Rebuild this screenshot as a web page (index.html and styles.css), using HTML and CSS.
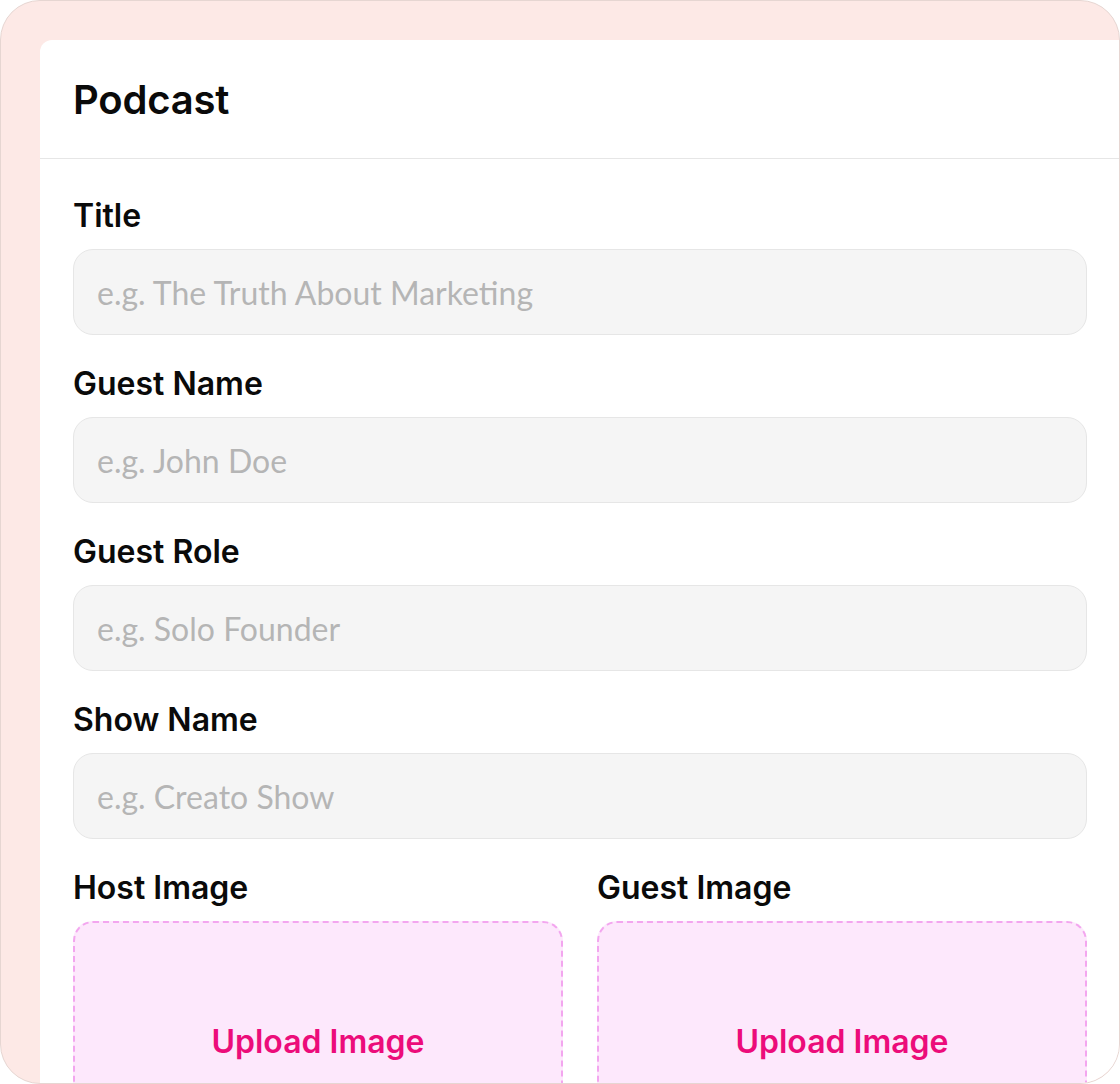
FILE: index.html
```html
<!DOCTYPE html>
<html lang="en">
<head>
<meta charset="utf-8">
<title>Podcast</title>
<link rel="stylesheet" href="styles.css">
</head>
<body>
<div class="frame">
  <div class="panel">
    <header class="panel-header">
      <h1 class="panel-title">Podcast</h1>
    </header>
    <form class="panel-body">
      <div class="field">
        <label class="field-label">Title</label>
        <input class="field-input" type="text" placeholder="e.g. The Truth About Marketing">
      </div>
      <div class="field">
        <label class="field-label">Guest Name</label>
        <input class="field-input" type="text" placeholder="e.g. John Doe">
      </div>
      <div class="field">
        <label class="field-label">Guest Role</label>
        <input class="field-input" type="text" placeholder="e.g. Solo Founder">
      </div>
      <div class="field">
        <label class="field-label">Show Name</label>
        <input class="field-input" type="text" placeholder="e.g. Creato Show">
      </div>
      <div class="uploads">
        <div class="field">
          <label class="field-label">Host Image</label>
          <div class="upload"><span class="upload-text">Upload Image</span></div>
        </div>
        <div class="field">
          <label class="field-label">Guest Image</label>
          <div class="upload"><span class="upload-text">Upload Image</span></div>
        </div>
      </div>
    </form>
  </div>
</div>
</body>
</html>
```
FILE: styles.css
```css
* { box-sizing: border-box; }
html, body { margin: 0; padding: 0; background: #ffffff; }
body { font-family: Inter, "Liberation Sans", sans-serif; color: #0a0a0a; }

.frame {
  width: 1120px;
  height: 1084px;
  border: 1px solid #e6d6d2;
  border-radius: 40px;
  background: #fde9e6;
  overflow: hidden;
  padding: 39px 0 0 39px;
}

.panel {
  background: #ffffff;
  height: 100%;
  border-top-left-radius: 12px;
  display: flex;
  flex-direction: column;
}

.panel-header {
  flex-shrink: 0;
  height: 119px;
  padding: 0 33px;
  display: flex;
  align-items: center;
  border-bottom: 1px solid #e6e6e6;
}

.panel-title {
  margin: 0;
  font-size: 40px;
  font-weight: 600;
  letter-spacing: -0.2px;
}

.panel-body {
  flex-shrink: 0;
  padding: 40px 32px 0 33px;
  display: flex;
  flex-direction: column;
  gap: 32px;
}

.field { display: flex; flex-direction: column; }

.field-label {
  font-size: 32px;
  font-weight: 600;
  line-height: 34px;
  margin-bottom: 16px;
}

.field-input {
  height: 86px;
  flex-shrink: 0;
  border: 1px solid #e6e6e6;
  border-radius: 20px;
  background: #f5f5f5;
  padding: 0 23px;
  font-family: Lato, "Noto Sans", sans-serif;
  font-size: 32px;
  color: #222;
  outline: none;
}
.field-input::placeholder { color: #b5b5b5; }

.uploads {
  display: grid;
  grid-template-columns: 1fr 1fr;
  gap: 34px;
}

.upload {
  height: 240px;
  flex-shrink: 0;
  border: 2px dashed #f3a6ef;
  border-radius: 20px;
  background: #fde8fc;
  display: flex;
  align-items: center;
  justify-content: center;
}

.upload-text {
  color: #ec0c7a;
  font-size: 32px;
  font-weight: 600;
}
```
